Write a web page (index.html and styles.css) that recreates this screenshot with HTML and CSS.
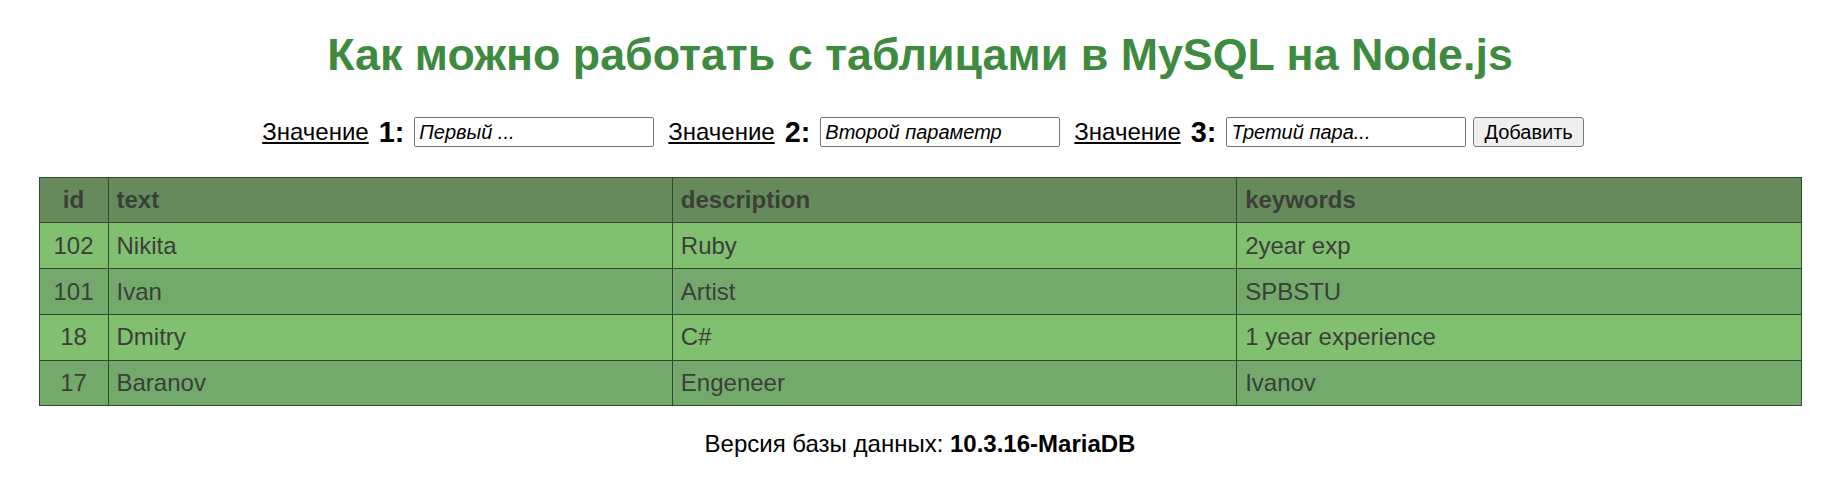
FILE: index.html
```html
<!DOCTYPE html>
<html lang="ru">
<head>
<meta charset="utf-8">
<title>MySQL на Node.js</title>
<link rel="stylesheet" href="styles.css">
</head>
<body>
<div class="page">
  <h1 class="title">Как можно работать с таблицами в MySQL на Node.js</h1>
  <form class="add-form">
    <div class="field">
      <span class="label">Значение</span>
      <b class="num">1:</b>
      <input class="inp" type="text" value="Первый ...">
    </div>
    <div class="field">
      <span class="label">Значение</span>
      <b class="num">2:</b>
      <input class="inp" type="text" value="Второй параметр">
    </div>
    <div class="field">
      <span class="label">Значение</span>
      <b class="num">3:</b>
      <input class="inp" type="text" value="Третий пара...">
    </div>
    <button class="btn" type="button">Добавить</button>
  </form>
  <table class="data">
    <colgroup>
      <col class="c-id">
      <col>
      <col>
      <col>
    </colgroup>
    <thead>
      <tr><th class="id">id</th><th>text</th><th>description</th><th>keywords</th></tr>
    </thead>
    <tbody>
      <tr><td class="id">102</td><td>Nikita</td><td>Ruby</td><td>2year exp</td></tr>
      <tr><td class="id">101</td><td>Ivan</td><td>Artist</td><td>SPBSTU</td></tr>
      <tr><td class="id">18</td><td>Dmitry</td><td>C#</td><td>1 year experience</td></tr>
      <tr><td class="id">17</td><td>Baranov</td><td>Engeneer</td><td>Ivanov</td></tr>
    </tbody>
  </table>
  <p class="version">Версия базы данных: <b>10.3.16-MariaDB</b></p>
</div>
</body>
</html>
```
FILE: styles.css
```css
html, body {
  margin: 0;
  padding: 0;
  background: #ffffff;
}

body {
  font-family: "Liberation Sans", Arial, sans-serif;
  font-size: 24px;
  color: #000;
}

.page {
  padding-left: 16px;
  display: flex;
  flex-direction: column;
  align-items: center;
}

.title {
  margin: 29px 0 0;
  font-size: 44.8px;
  line-height: 51.5px;
  font-weight: bold;
  color: #3e8a3e;
  text-align: center;
}

.add-form {
  margin-top: 35px;
  display: flex;
  align-items: center;
  gap: 14px;
  padding-left: 6px;
}

.field {
  display: flex;
  align-items: center;
  gap: 10px;
}

.label {
  text-decoration: underline;
  font-size: 24px;
}

.num {
  font-size: 28.8px;
  font-weight: bold;
  line-height: 33px;
}

.inp {
  box-sizing: border-box;
  width: 240px;
  height: 30px;
  margin: 0;
  padding: 0 4px;
  border: 1px solid #767676;
  border-radius: 2px;
  font-family: "Liberation Sans", Arial, sans-serif;
  font-size: 20px;
  font-style: italic;
  color: #000;
  background: #fff;
}

.btn {
  box-sizing: border-box;
  height: 30px;
  margin: 0 0 0 -7px;
  padding: 0 10px;
  border: 1px solid #767676;
  border-radius: 3px;
  background: #efefef;
  font-family: "Liberation Sans", Arial, sans-serif;
  font-size: 20px;
  color: #000;
}

.data {
  margin-top: 28px;
  width: 1763px;
  table-layout: fixed;
  border-collapse: collapse;
  border: 1px solid #2f4a2c;
  color: #3a3f38;
}

.c-id {
  width: 69px;
}

.data th,
.data td {
  border: 1px solid #2f4a2c;
  padding: 9.5px 8px;
  text-align: left;
  font-size: 24px;
  line-height: 25.8px;
  height: 25.8px;
}

.data th {
  background: #678a5c;
  font-weight: bold;
  color: #3a3f38;
}

.data .id {
  text-align: center;
  padding-left: 2px;
  padding-right: 2px;
}

.data tbody tr:nth-child(odd) td {
  background: #80c070;
}

.data tbody tr:nth-child(even) td {
  background: #73aa6c;
}

.version {
  margin: 24px 0 0;
  font-size: 24px;
  text-align: center;
}
```
